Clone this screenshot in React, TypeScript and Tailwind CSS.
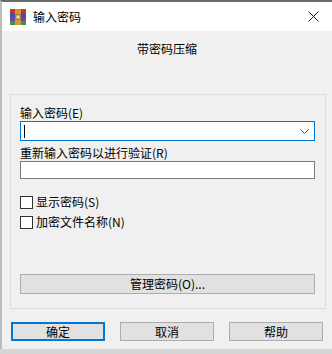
import { useState } from 'react'

function RarIcon() {
  return (
    <svg width="18" height="18" viewBox="0 0 18 18">
      <rect x="1" y="1" width="16" height="4" fill="#c0392b" />
      <rect x="1" y="5" width="16" height="4" fill="#3b4fb8" />
      <rect x="1" y="9" width="16" height="4" fill="#7a3fa0" />
      <rect x="1" y="13" width="16" height="4" fill="#3a9a3a" />
      <rect x="6" y="1" width="6" height="16" fill="#e0a030" opacity="0.85" />
      <rect x="7" y="7" width="4" height="4" fill="#f5e6b0" stroke="#6b4a10" strokeWidth="0.6" />
    </svg>
  )
}

function Button({ label, primary }: { label: string; primary?: boolean }) {
  return (
    <div
      className={`flex h-[19px] w-[94px] items-center justify-center bg-[#e1e1e1] text-[12px] text-black ${
        primary ? 'border-2 border-[#0078d7]' : 'border border-[#adadad]'
      }`}
    >
      {label}
    </div>
  )
}

export default function App() {
  const [showPwd, setShowPwd] = useState(false)
  const [encNames, setEncNames] = useState(false)

  return (
    <div
      className="flex h-[354px] w-[332px] flex-col bg-[#d6d6d6]"
      style={{ fontFamily: '"Noto Sans CJK SC", "Noto Sans", sans-serif' }}
    >
      <div className="flex h-[349px] flex-col border-t-2 border-l-2 border-[#6b6b6b] border-l-[#bdbdbd] bg-[#f0f0f0]">
        {/* Title bar */}
        <div className="flex h-[29px] items-center bg-white pl-[7px]">
          <RarIcon />
          <span className="ml-[6px] text-[12px] text-black">输入密码</span>
          <svg className="ml-auto mr-[13px]" width="11" height="11" viewBox="0 0 11 11">
            <path d="M0.5 0.5 L10.5 10.5 M10.5 0.5 L0.5 10.5" stroke="#111" strokeWidth="1" />
          </svg>
        </div>

        <div className="mt-[10px] text-center text-[12px] leading-4 text-black">带密码压缩</div>

        {/* Group box */}
        <div className="ml-[8px] mt-[37px] flex h-[215px] w-[316px] flex-col border border-[#dcdcdc] pl-[9px] pr-[10px] pt-[10px]">
          <div className="text-[12px] leading-4 text-black">输入密码(E)</div>
          <div className="flex h-[20px] items-center border border-[#0078d7] bg-white">
            <div className="ml-[3px] h-[13px] w-px bg-black" />
            <svg className="ml-auto mr-[5px]" width="9" height="5" viewBox="0 0 9 5">
              <path d="M0.5 0.5 L4.5 4.5 L8.5 0.5" fill="none" stroke="#555" strokeWidth="1" />
            </svg>
          </div>
          <div className="mt-[4px] text-[12px] leading-4 text-black">重新输入密码以进行验证(R)</div>
          <div className="h-[18px] border border-[#7a7a7a] bg-white" />

          <label className="mt-[15px] flex h-4 items-center gap-[3px] text-[12px] text-black">
            <span
              onClick={() => setShowPwd(!showPwd)}
              className="h-[13px] w-[13px] border border-[#333] bg-white"
            >
              {showPwd ? '' : ''}
            </span>
            显示密码(S)
          </label>
          <label className="mt-[4px] flex h-4 items-center gap-[3px] text-[12px] text-black">
            <span
              onClick={() => setEncNames(!encNames)}
              className="h-[13px] w-[13px] border border-[#333] bg-white"
            />
            加密文件名称(N)
          </label>

          <div className="mt-[44px] flex h-[20px] items-center justify-center border border-[#adadad] bg-[#e1e1e1] text-[12px] text-black">
            管理密码(O)...
          </div>
        </div>

        {/* Buttons */}
        <div className="ml-[9px] mt-[13px] flex gap-[15px]">
          <Button label="确定" primary />
          <Button label="取消" />
          <Button label="帮助" />
        </div>
      </div>
    </div>
  )
}
